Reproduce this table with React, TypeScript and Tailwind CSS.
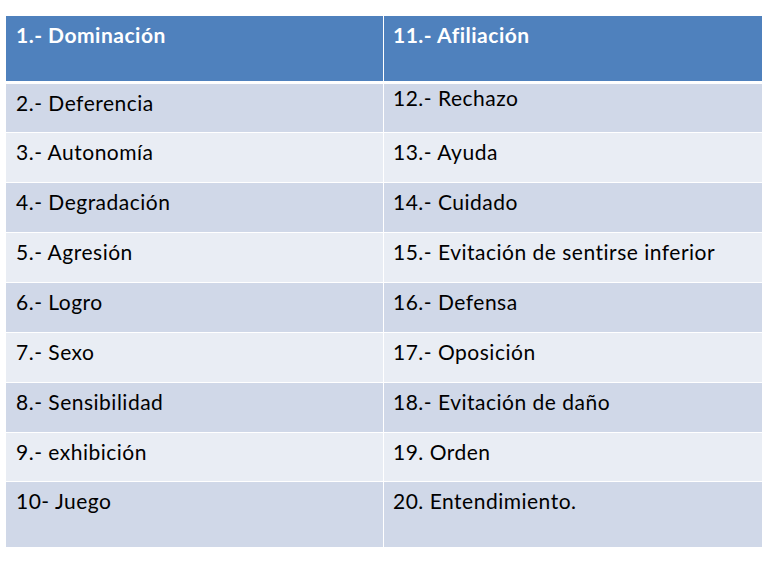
const rows: { left: string; right: string; h: string; rightTop?: string }[] = [
  { left: "2.- Deferencia", right: "12.- Rechazo", h: "h-[48px]", rightTop: "pt-[2px]" },
  { left: "3.- Autonomía", right: "13.- Ayuda", h: "h-[49px]" },
  { left: "4.- Degradación", right: "14.- Cuidado", h: "h-[49px]" },
  { left: "5.- Agresión", right: "15.- Evitación de sentirse inferior", h: "h-[49px]" },
  { left: "6.- Logro", right: "16.- Defensa", h: "h-[49px]" },
  { left: "7.- Sexo", right: "17.- Oposición", h: "h-[49px]" },
  { left: "8.- Sensibilidad", right: "18.- Evitación de daño", h: "h-[49px]" },
  { left: "9.- exhibición", right: "19. Orden", h: "h-[48px]" },
  { left: "10- Juego", right: "20. Entendimiento.", h: "h-[65px]" },
];

export default function App() {
  return (
    <div className="w-[768px] h-[580px] bg-white pt-[16px] pl-[6px] font-['Lato','Open_Sans',sans-serif] text-[21px] leading-[24px] tracking-[0.5px]">
      <div className="flex w-[756px] flex-col gap-px">
        {/* Header */}
        <div className="mb-[2px] flex h-[65px] gap-px">
          <div className="w-[377px] bg-[#4f81bd] px-[10px] pt-[7px] font-bold text-white">1.- Dominación</div>
          <div className="flex-1 bg-[#4f81bd] px-[9px] pt-[7px] font-bold text-white">11.- Afiliación</div>
        </div>

        {rows.map((r, i) => {
          const bg = i % 2 === 0 ? "bg-[#d0d8e8]" : "bg-[#e9edf4]";
          return (
            <div key={r.left} className={`flex gap-px ${r.h}`}>
              <div className={`w-[377px] px-[10px] pt-[7px] text-black ${bg}`}>{r.left}</div>
              <div className={`flex-1 px-[9px] text-black ${bg} ${r.rightTop ?? "pt-[7px]"}`}>{r.right}</div>
            </div>
          );
        })}
      </div>
    </div>
  );
}
